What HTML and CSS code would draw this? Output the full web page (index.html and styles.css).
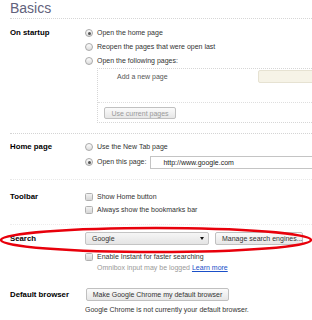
FILE: index.html
```html
<!DOCTYPE html>
<html lang="en">
<head>
<meta charset="UTF-8">
<title>Options - Basics</title>
<link rel="stylesheet" href="styles.css">
</head>
<body>
<div class="page">
    <h1 class="title">Basics</h1>

    <section class="section startup">
        <div class="label">On startup</div>
        <div class="controls">
            <div class="row"><span class="radio checked"></span>Open the home page</div>
            <div class="row"><span class="radio"></span>Reopen the pages that were open last</div>
            <div class="row"><span class="radio"></span>Open the following pages:</div>
            <div class="pages-box">
                <div class="pages-list">
                    <div class="page-entry">
                        <span class="entry-text">Add a new page</span>
                        <span class="entry-input"></span>
                    </div>
                </div>
                <div class="pages-actions">
                    <button class="btn disabled">Use current pages</button>
                </div>
            </div>
        </div>
    </section>

    <section class="section homepage">
        <div class="label">Home page</div>
        <div class="controls">
            <div class="row"><span class="radio"></span>Use the New Tab page</div>
            <div class="row row-input"><span class="radio checked"></span>Open this page:<span class="url-input">http://www.google.com</span></div>
        </div>
    </section>

    <section class="section toolbar">
        <div class="label">Toolbar</div>
        <div class="controls">
            <div class="row"><span class="checkbox"></span>Show Home button</div>
            <div class="row"><span class="checkbox"></span>Always show the bookmarks bar</div>
        </div>
    </section>

    <section class="section search">
        <div class="label">Search</div>
        <div class="controls">
            <div class="row">
                <div class="select">Google<span class="arrow"></span></div>
                <button class="btn manage">Manage search engines...</button>
            </div>
            <div class="row instant"><span class="checkbox"></span>Enable Instant for faster searching</div>
            <div class="note">Omnibox input may be logged <a href="#">Learn more</a></div>
        </div>
    </section>

    <section class="section default">
        <div class="label">Default browser</div>
        <div class="controls">
            <div class="row"><button class="btn make-default">Make Google Chrome my default browser</button></div>
            <div class="status">Google Chrome is not currently your default browser.</div>
        </div>
    </section>
</div>

<!-- red marker drawn over the search row -->
<svg class="marker" width="312" height="28" viewBox="0 0 312 28">
    <ellipse cx="156" cy="14" rx="155" ry="12" fill="none" stroke="#e8000b" stroke-width="2.5"/>
</svg>
</body>
</html>
```

FILE: styles.css
```css
html, body {
    overflow: hidden;
}

body {
    margin: 0;
    padding: 0;
    background: #fff;
    font-family: "Liberation Sans", Arial, sans-serif;
    font-size: 7px;
    color: #333;
    position: relative;
    width: 312px;
    height: 320px;
}

.page {
    padding-left: 10px;
}

.title {
    margin: 0;
    font-size: 14px;
    line-height: 16px;
    font-weight: normal;
    color: #62627c;
    padding-bottom: 2px;
    border-bottom: 1px dotted #d6d6d6;
}

.section {
    display: flex;
    border-bottom: 1px dotted #d4d4d4;
}

.label {
    width: 75px;
    flex: none;
    font-weight: bold;
    font-size: 7.8px;
    color: #000;
}

.controls {
    flex: 1;
    min-width: 0;
    overflow: hidden;
}

.row {
    display: flex;
    align-items: center;
    white-space: nowrap;
}

/* radio + checkbox */
.radio,
.checkbox {
    flex: none;
    width: 8px;
    height: 8px;
    box-sizing: border-box;
    margin-right: 4px;
    border: 1px solid #a9a9a9;
    background: linear-gradient(#fdfdfd, #dcdcdc);
    position: relative;
}

.radio {
    border-radius: 50%;
}

.radio.checked::after {
    content: "";
    position: absolute;
    left: 1.5px;
    top: 1.5px;
    width: 3px;
    height: 3px;
    border-radius: 50%;
    background: #555;
}

.checkbox {
    border-radius: 1.5px;
    border-color: #b0b0b0;
    background: linear-gradient(#f2f2f2, #d6d6d6);
}

.btn {
    font-family: inherit;
    font-size: 7px;
    height: 13px;
    padding: 0 6px;
    margin: 0;
    color: #333;
    border: 1px solid #c0c0c0;
    border-radius: 2px;
    background: linear-gradient(#fbfbfb, #e6e6e6);
    white-space: nowrap;
}

.btn.disabled {
    color: #9a9a9a;
}

/* On startup */
.startup {
    padding: 7px 0 10px;
}

.startup .label,
.startup .row {
    line-height: 14px;
    height: 14px;
}

.pages-box {
    margin-left: 12px;
    width: 260px;
    border: 1px dotted #d6d6d6;
    border-right: none;
}

.pages-list {
    height: 34px;
    padding-top: 1px;
    box-sizing: border-box;
    border-bottom: 1px dotted #dedede;
}

.page-entry {
    display: flex;
    align-items: center;
    height: 13px;
    padding-left: 19px;
}

.entry-text {
    width: 141px;
    flex: none;
    color: #555;
}

.entry-input {
    flex: none;
    width: 100px;
    height: 13px;
    box-sizing: border-box;
    border: 1px solid #e6e2d2;
    border-radius: 2px;
    background: #f6f3e7;
}

.pages-actions {
    height: 19px;
    box-sizing: border-box;
    padding: 4px 0 0 6px;
}

.pages-actions .btn {
    height: 12px;
    width: 72px;
    padding: 0;
}

/* Home page */
.homepage {
    padding: 6px 0 9px;
    border-bottom-color: #e8e8e8;
}

.homepage .label,
.homepage .row {
    line-height: 14px;
    height: 14px;
}

.homepage .row-input {
    height: 16px;
}

.url-input {
    flex: none;
    margin-left: 4px;
    width: 200px;
    height: 13px;
    line-height: 11px;
    box-sizing: border-box;
    padding-left: 12px;
    border: 1px solid #c4c4c4;
    border-right: none;
    color: #222;
}

/* Toolbar */
.toolbar {
    padding: 10px 0 8px;
    border-bottom-color: #ececec;
}

.toolbar .label,
.toolbar .row {
    line-height: 13px;
    height: 13px;
}

/* Search */
.search {
    padding: 7px 0 8px;
    border-bottom: none;
}

.search .label,
.search .row {
    line-height: 13px;
    height: 13px;
}

.select {
    position: relative;
    flex: none;
    width: 124px;
    height: 13px;
    box-sizing: border-box;
    padding-left: 6px;
    line-height: 11px;
    border: 1px solid #c4c4c4;
    border-radius: 2px;
    background: linear-gradient(#f6f6f6, #e4e4e4);
}

.arrow {
    position: absolute;
    right: 4px;
    top: 4px;
    border-left: 2.5px solid transparent;
    border-right: 2.5px solid transparent;
    border-top: 3px solid #111;
}

.btn.manage {
    flex: none;
    margin-left: 6px;
    width: 88px;
}

.search .instant {
    margin-top: 5px;
}

.note {
    padding-left: 12px;
    line-height: 9px;
    height: 9px;
    color: #999;
}

.note a {
    color: #1a4fc8;
}

/* Default browser */
.default {
    padding-top: 8px;
    border-bottom: none;
}

.default .label,
.default .row {
    line-height: 13px;
    height: 13px;
}

.btn.make-default {
    margin-left: 1px;
    width: 143px;
    padding: 0;
}

.status {
    margin-top: 3px;
    line-height: 12px;
    color: #333;
}

.marker {
    position: absolute;
    left: 0;
    top: 226px;
}
```
